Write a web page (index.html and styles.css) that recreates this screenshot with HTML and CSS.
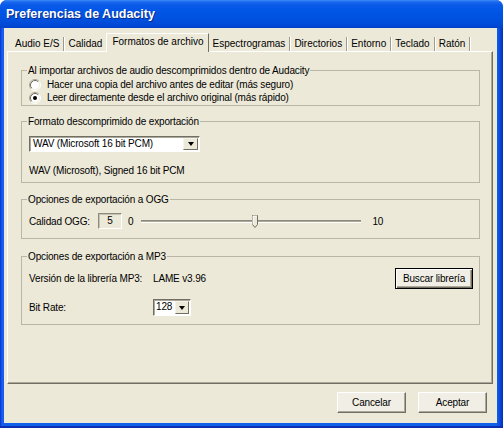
FILE: index.html
```html
<!DOCTYPE html>
<html lang="es">
<head>
<meta charset="utf-8">
<title>Preferencias de Audacity</title>
<link rel="stylesheet" href="styles.css">
</head>
<body>
<div class="window">
  <div class="titlebar"><span class="title">Preferencias de Audacity</span></div>
  <div class="frame">
    <div class="client">
      <div class="tabs">
        <div class="tab first">Audio E/S</div>
        <div class="tab">Calidad</div>
        <div class="tab selected">Formatos de archivo</div>
        <div class="tab">Espectrogramas</div>
        <div class="tab">Directorios</div>
        <div class="tab">Entorno</div>
        <div class="tab">Teclado</div>
        <div class="tab">Ratón</div>
      </div>
      <div class="panel">
        <fieldset class="group g1">
          <legend>Al importar archivos de audio descomprimidos dentro de Audacity</legend>
          <div class="radio">
            <svg class="rb" width="12" height="12" viewBox="0 0 12 12"><circle cx="6" cy="6" r="4.5" fill="#fff"/><path d="M2.11 9.89A5.5 5.5 0 0 1 9.89 2.11" fill="none" stroke="#aca899"/><path d="M9.89 2.11A5.5 5.5 0 0 1 2.11 9.89" fill="none" stroke="#fff"/><path d="M2.82 9.18A4.5 4.5 0 0 1 9.18 2.82" fill="none" stroke="#716f64"/><path d="M9.18 2.82A4.5 4.5 0 0 1 2.82 9.18" fill="none" stroke="#f1efe2"/></svg>
            <span>Hacer una copia del archivo antes de editar (más seguro)</span>
          </div>
          <div class="radio">
            <svg class="rb" width="12" height="12" viewBox="0 0 12 12"><circle cx="6" cy="6" r="4.5" fill="#fff"/><path d="M2.11 9.89A5.5 5.5 0 0 1 9.89 2.11" fill="none" stroke="#aca899"/><path d="M9.89 2.11A5.5 5.5 0 0 1 2.11 9.89" fill="none" stroke="#fff"/><path d="M2.82 9.18A4.5 4.5 0 0 1 9.18 2.82" fill="none" stroke="#716f64"/><path d="M9.18 2.82A4.5 4.5 0 0 1 2.82 9.18" fill="none" stroke="#f1efe2"/><circle cx="6" cy="6" r="2" fill="#000"/></svg>
            <span>Leer directamente desde el archivo original (más rápido)</span>
          </div>
        </fieldset>

        <fieldset class="group g2">
          <legend>Formato descomprimido de exportación</legend>
          <div class="combo wide">
            <span class="combo-text">WAV (Microsoft 16 bit PCM)</span>
            <span class="combo-btn"><span class="arrow"></span></span>
          </div>
          <div class="desc">WAV (Microsoft), Signed 16 bit PCM</div>
        </fieldset>

        <fieldset class="group g3">
          <legend>Opciones de exportación a OGG</legend>
          <div class="row">
            <span class="lbl-ogg">Calidad OGG:</span>
            <span class="valbox">5</span>
            <span class="min">0</span>
            <span class="slider">
              <span class="track"></span>
              <svg class="thumb" width="6" height="13" viewBox="0 0 6 13"><path d="M0.5 0.5H5.5V9.5L3 12.5L0.5 9.5Z" fill="#ece9d8" stroke="#716f64"/><path d="M1 9.3V1H5" fill="none" stroke="#fff"/></svg>
            </span>
            <span class="max">10</span>
          </div>
        </fieldset>

        <fieldset class="group g4">
          <legend>Opciones de exportación a MP3</legend>
          <div class="row r1">
            <span class="lbl-mp3">Versión de la librería MP3:</span>
            <span>LAME v3.96</span>
            <button class="btn default">Buscar librería</button>
          </div>
          <div class="row r2">
            <span class="lbl-mp3">Bit Rate:</span>
            <div class="combo small">
              <span class="combo-text">128</span>
              <span class="combo-btn"><span class="arrow"></span></span>
            </div>
          </div>
        </fieldset>
      </div>
      <div class="buttons">
        <button class="btn">Cancelar</button>
        <button class="btn">Aceptar</button>
      </div>
    </div>
  </div>
</div>
</body>
</html>
```

FILE: styles.css
```css
html, body {
  margin: 0;
  padding: 0;
  background: #ffffff;
}
body {
  font-family: "Liberation Sans", Arial, sans-serif;
  font-size: 10px;
  color: #000;
}
.window {
  width: 503px;
  height: 428px;
  display: flex;
  flex-direction: column;
  border-radius: 7px 7px 0 0;
  overflow: hidden;
  background: #0a46d8;
}
.titlebar {
  height: 28px;
  flex: none;
  box-sizing: border-box;
  padding: 7px 0 0 6px;
  background: linear-gradient(#3d8cf6 0, #1a68ef 2px, #0a5ae8 5px, #0055e5 12px, #0050de 20px, #0047d2 26px, #0040c8 28px);
}
.title {
  color: #fff;
  font-weight: bold;
  font-size: 12.5px;
  line-height: 15px;
  text-shadow: 1px 1px 0 #0a2a8a;
}
.frame {
  flex: 1;
  display: flex;
  padding: 0 6px 5px 4px;
  background: linear-gradient(90deg, #0831d9 0, #1a5ee8 2px, #1060ea 4px, #1060ea 497px, #0a48dc 500px, #0430b8 503px);
  box-shadow: inset 0 -2px 0 #0a2fb0;
}
.client {
  flex: 1;
  display: flex;
  flex-direction: column;
  background: #ece9d8;
}
.tabs {
  display: flex;
  align-items: flex-end;
  padding: 5px 0 0 6px;
  height: 18px;
  flex: none;
  box-sizing: content-box;
}
.tab {
  height: 14px;
  line-height: 14px;
  padding: 0 4px 0 4px;
  border-right: 1px solid #9d9b8f;
  box-shadow: 1px 0 0 #fff;
  white-space: nowrap;
}
.tab.first {
  padding-left: 5px;
}
.tab.selected {
  line-height: 15px;
  padding: 0 4px 2px 5px;
  box-sizing: border-box;
  height: 19px;
  border-left: 1px solid #fff;
  border-top: 1px solid #fff;
  border-right: 1px solid #716f64;
  box-shadow: none;
  background: #ece9d8;
  margin-bottom: -1px;
  margin-left: -1px;
  position: relative;
  z-index: 1;
}
.panel {
  flex: 1;
  margin: 0 4px 0 3px;
  border: 1px solid;
  border-color: #fff #716f64 #716f64 #fff;
  box-shadow: inset -1px -1px 0 #aca899;
  padding: 12px 12px 0 13px;
  display: flex;
  flex-direction: column;
  letter-spacing: -0.15px;
}
.group {
  margin: 0;
  border: 1px solid #b9b6a8;
  padding: 0 7px;
  min-width: 0;
}
.group legend {
  padding: 0 1px;
  margin-left: -2px;
  line-height: 13px;
}
.g1 {
  padding-top: 1px;
  padding-bottom: 1px;
}
.radio {
  display: flex;
  align-items: center;
  height: 13px;
}
.rb {
  flex: none;
  margin: 0 6px 0 0;
}
.g2 {
  margin-top: 9px;
  padding-top: 8px;
  padding-bottom: 5px;
}
.combo {
  display: flex;
  align-items: stretch;
  box-sizing: border-box;
  background: #fff;
  border: 1px solid;
  border-color: #716f64 #fff #fff #716f64;
  box-shadow: inset 1px 1px 0 #aca899;
}
.combo.wide {
  width: 171px;
  height: 16px;
}
.combo.small {
  width: 38px;
  height: 17px;
}
.combo-text {
  flex: 1;
  padding-left: 3px;
  line-height: 14px;
  white-space: nowrap;
}
.combo.small .combo-text {
  padding-left: 2px;
}
.combo-btn {
  flex: none;
  width: 15px;
  margin: 1px;
  box-sizing: border-box;
  background: #ece9d8;
  border: 1px solid;
  border-color: #f4f3ec #716f64 #716f64 #f4f3ec;
  display: flex;
  align-items: center;
  justify-content: center;
}
.combo.small .combo-btn {
  width: 14px;
}
.arrow {
  width: 0;
  height: 0;
  border-left: 3.5px solid transparent;
  border-right: 3.5px solid transparent;
  border-top: 4px solid #000;
}
.desc {
  margin-top: 12px;
  line-height: 13px;
}
.g3 {
  margin-top: 10px;
  padding-top: 7px;
  padding-bottom: 9px;
}
.row {
  display: flex;
  align-items: center;
}
.lbl-ogg {
  width: 69px;
  flex: none;
}
.valbox {
  width: 24px;
  height: 16px;
  box-sizing: border-box;
  border: 1px solid;
  border-color: #8d8b80 #fff #fff #8d8b80;
  box-shadow: inset 1px 1px 0 #c5c2b2;
  text-align: center;
  line-height: 14px;
}
.min {
  margin-left: 6px;
}
.slider {
  position: relative;
  width: 220px;
  height: 16px;
  margin-left: 8px;
  display: flex;
  align-items: center;
}
.track {
  display: block;
  width: 100%;
  height: 1px;
  border-top: 1px solid #8d8b80;
  border-bottom: 1px solid #fff;
  background: #aca899;
}
.thumb {
  position: absolute;
  left: 111px;
  top: 2px;
}
.max {
  margin-left: 11px;
}
.g4 {
  margin-top: 11px;
  padding-top: 5px;
  padding-bottom: 8px;
  padding-right: 6px;
}
.lbl-mp3 {
  width: 124px;
  flex: none;
}
.r2 {
  margin-top: 10px;
}
.btn {
  font-family: inherit;
  font-size: 10px;
  letter-spacing: -0.15px;
  color: #000;
  height: 21px;
  width: 69px;
  padding: 0;
  background: #f1efe5;
  border: 1px solid;
  border-color: #fff #716f64 #716f64 #fff;
  box-shadow: inset -1px -1px 0 #aca899;
  border-radius: 0;
}
.btn.default {
  margin-left: auto;
  width: 78px;
  border: 1px solid #000;
  box-shadow: inset 1px 1px 0 #fff, inset -1px -1px 0 #716f64, inset -2px -2px 0 #aca899;
}
.buttons {
  flex: none;
  display: flex;
  justify-content: flex-end;
  gap: 12px;
  padding: 8px 10px 10px 0;
}
```
